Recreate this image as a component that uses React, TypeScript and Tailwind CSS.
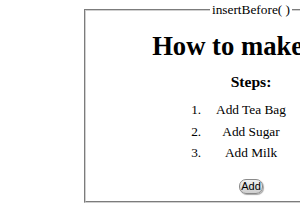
export default function App() {
  return (
    <div className="w-[300px] h-[210px] overflow-hidden bg-white text-black font-['Liberation_Serif',serif] text-[13.333px]">
      <fieldset className="ml-[84px] mt-[2px] w-[334px] border-2 [border-style:groove] border-[#d0d0d0] px-[10px] pb-[7px]">
        <legend className="mx-auto px-[2px] leading-[15px]">insertBefore( )</legend>
        <h1 className="mt-[14px] text-center text-[26.667px] font-bold leading-[31px]">How to make Tea</h1>
        <h3 className="mt-[11px] text-center text-[15.6px] font-bold leading-[18px]">Steps:</h3>
        <ol className="mx-auto mt-[11px] w-[93px] list-decimal list-outside text-center leading-[15px]">
          <li>Add Tea Bag</li>
          <li className="mt-[6.7px]">Add Sugar</li>
          <li className="mt-[6.7px]">Add Milk</li>
        </ol>
        <div className="mt-[19px] flex justify-center">
          <button className="h-[15px] w-[24px] rounded-[7px] border border-[#8a8a8a] bg-gradient-to-b from-[#f2f2f2] to-[#cfcfcf] text-[11px] leading-[13px] font-['Liberation_Sans',sans-serif] text-black shadow-[1px_1px_1px_rgba(0,0,0,0.35)]">Add</button>
        </div>
      </fieldset>
    </div>
  );
}
